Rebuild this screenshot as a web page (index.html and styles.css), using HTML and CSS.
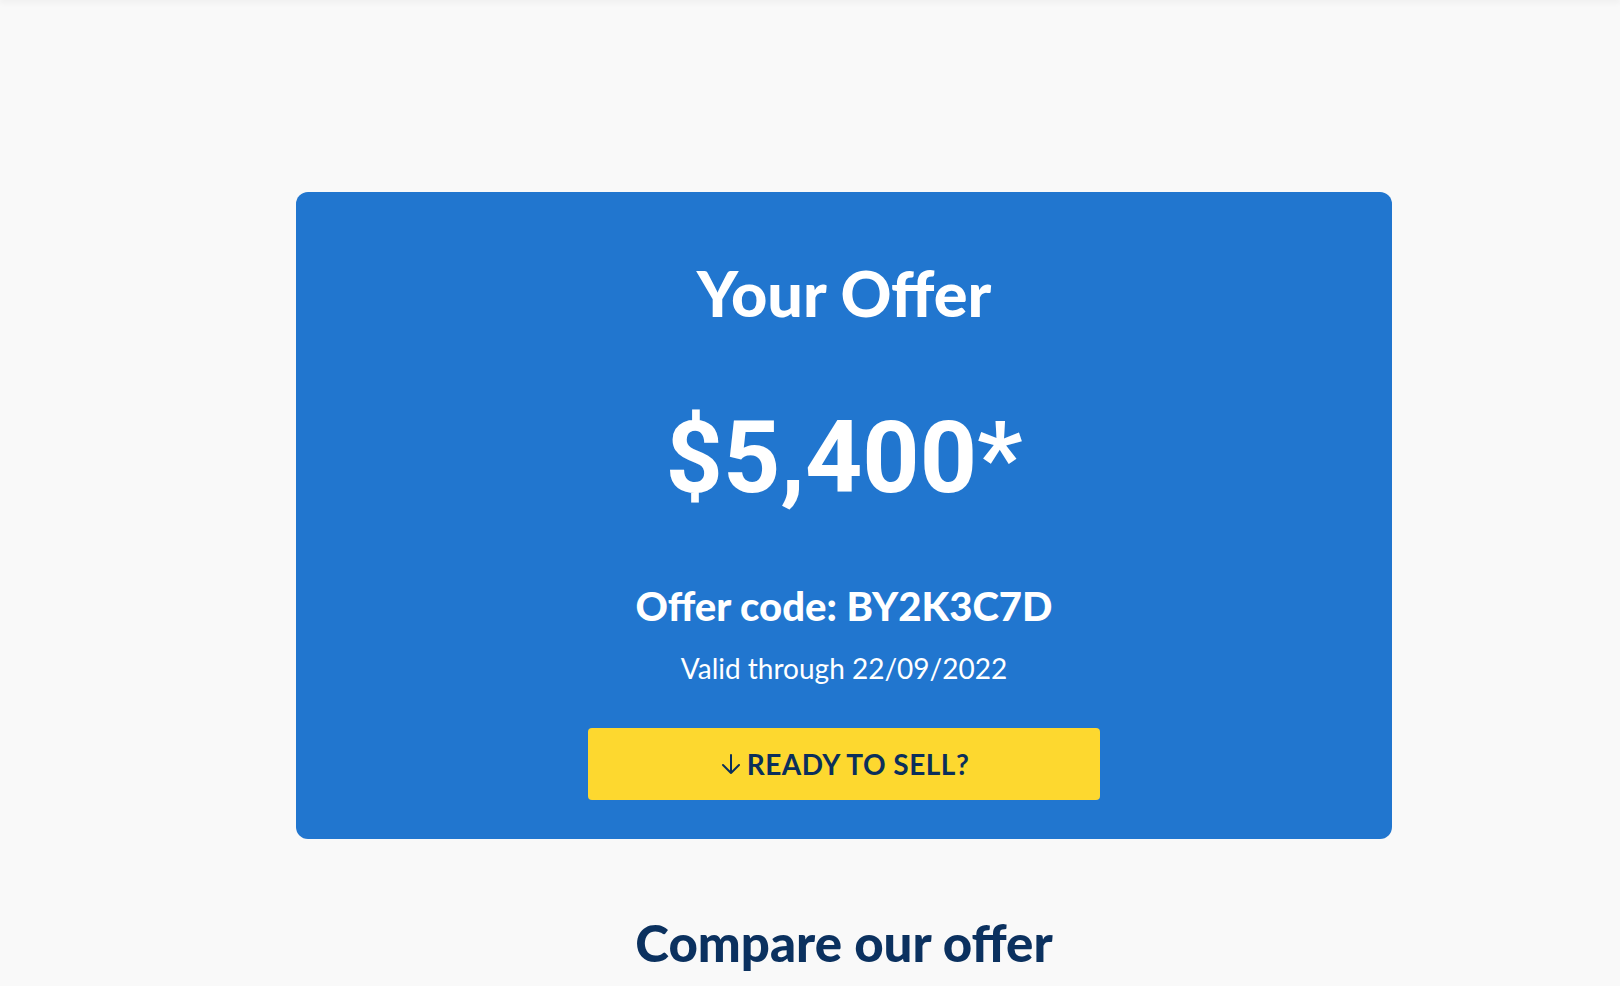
FILE: index.html
```html
<!DOCTYPE html>
<html lang="en">
<head>
<meta charset="utf-8">
<title>Your Offer</title>
<link rel="stylesheet" href="styles.css">
</head>
<body>
<div class="topbar"></div>
<main class="page">
  <section class="offer-card">
    <h1 class="offer-title">Your Offer</h1>
    <div class="offer-price">$5,400*</div>
    <div class="offer-code">Offer code: BY2K3C7D</div>
    <div class="offer-valid">Valid through 22/09/2022</div>
    <a class="sell-btn" href="#">
      <svg class="sell-icon" viewBox="0 0 24 24" width="24" height="24" aria-hidden="true"><path d="M12 3v18M4 13l8 8 8-8" fill="none" stroke="currentColor" stroke-width="2" stroke-linecap="round" stroke-linejoin="round"/></svg>
      <span>READY TO SELL?</span>
    </a>
  </section>
  <h2 class="compare-title">Compare our offer</h2>
</main>
</body>
</html>
```
FILE: styles.css
```css
* { box-sizing: border-box; }
html, body { margin: 0; padding: 0; }
body {
  background: #f9f9f9;
  font-family: "Lato", "Liberation Sans", sans-serif;
  height: 986px;
  overflow: hidden;
}
.topbar {
  height: 0;
  box-shadow: 0 0 6px 1px rgba(0,0,0,0.12);
}
.page {
  display: flex;
  flex-direction: column;
  align-items: flex-start;
  padding-top: 192px;
  padding-left: 296px;
}
.offer-card {
  width: 1096px;
  height: 647px;
  background: #2176cf;
  border-radius: 12px;
  display: flex;
  flex-direction: column;
  align-items: center;
  color: #fff;
  padding-top: 61px;
}
.offer-title {
  margin: 0;
  font-family: "Lato", sans-serif;
  font-weight: 900;
  font-size: 63px;
  line-height: 80px;
}
.offer-price {
  margin-top: 70px;
  font-family: "Roboto", sans-serif;
  font-weight: 700;
  font-size: 100px;
  line-height: 110px;
}
.offer-code {
  margin-top: 70px;
  font-family: "Lato", sans-serif;
  font-weight: 900;
  font-size: 40px;
  line-height: 46px;
}
.offer-valid {
  margin-top: 22px;
  font-family: "Lato", sans-serif;
  font-weight: 400;
  font-size: 28px;
  line-height: 34px;
}
.sell-btn {
  margin-top: 43px;
  width: 512px;
  height: 72px;
  background: #fdd82f;
  border-radius: 4px;
  display: flex;
  align-items: center;
  justify-content: center;
  gap: 4px;
  color: #0b2f5b;
  text-decoration: none;
  font-family: "Lato", sans-serif;
  font-weight: 700;
  font-size: 28px;
  letter-spacing: 0.5px;
}
.sell-icon { display: block; }
.compare-title {
  margin: 74px 0 0;
  width: 1096px;
  text-align: center;
  color: #0b315f;
  font-family: "Lato", sans-serif;
  font-weight: 900;
  font-size: 51px;
  line-height: 60px;
}
```
